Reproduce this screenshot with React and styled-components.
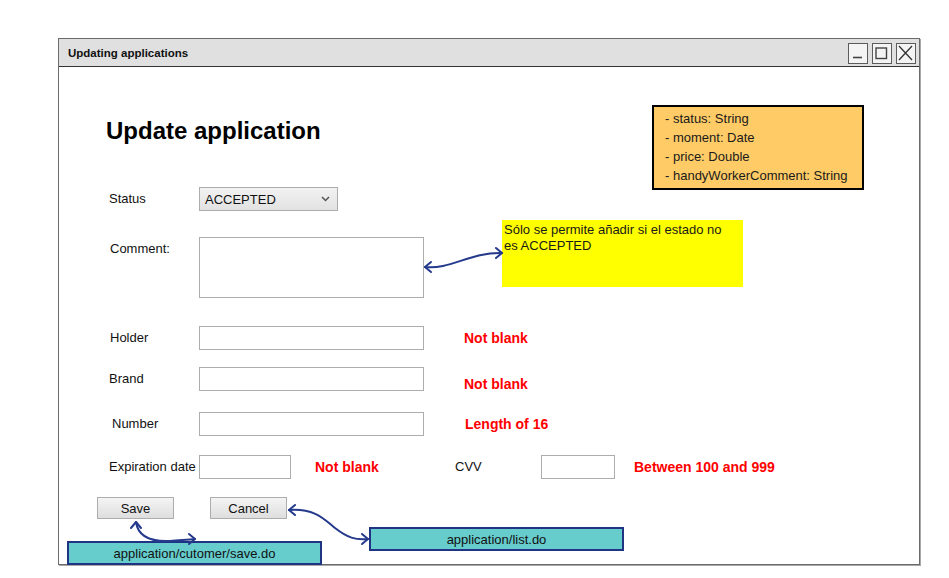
import React from "react";
import styled, { createGlobalStyle } from "styled-components";

const GlobalStyle = createGlobalStyle`
  body {
    margin: 0;
    background: #ffffff;
    font-family: "Liberation Sans", Arial, sans-serif;
    color: #000000;
  }
`;

const Page = styled.div`
  width: 949px;
  height: 578px;
  box-sizing: border-box;
  padding: 38px 0 0 58px;
  overflow: hidden;
`;

const Window = styled.div`
  width: 862px;
  height: 527px;
  box-sizing: border-box;
  border: 1px solid #6b6b6b;
  box-shadow: 1px 1px 0 #a8a8a8;
  background: #ffffff;
  display: flex;
  flex-direction: column;
`;

const TitleBar = styled.div`
  height: 27px;
  flex: none;
  display: flex;
  align-items: center;
  justify-content: space-between;
  padding: 0 3px 0 9px;
  background: #e0e0e0;
  border-bottom: 1px solid #333333;
  font-size: 11.5px;
  font-weight: 700;
  color: #111111;
`;

const WinButtons = styled.div`
  display: flex;
  gap: 4px;
  margin-top: 2px;
`;

const WinButton = styled.div`
  width: 20px;
  height: 21px;
  box-sizing: border-box;
  border: 1.5px solid #5c5c5c;
  background: #f4f4f4;
  svg {
    display: block;
  }
`;

const Content = styled.div`
  position: relative;
  flex: 1;
  padding-left: 38px;
  display: flex;
  flex-direction: column;
  align-items: flex-start;
`;

const Heading = styled.h1`
  margin: 50px 0 0 9px;
  font-size: 24px;
  line-height: 28px;
  font-weight: 700;
`;

const Row = styled.div`
  display: flex;
  align-items: ${(p) => (p.$top ? "flex-start" : "center")};
  margin-top: ${(p) => p.$mt}px;
  padding-left: ${(p) => (p.$flush ? 0 : 12)}px;
  gap: ${(p) => p.$gap || 0}px;
`;

const Label = styled.div`
  width: ${(p) => p.$w || 90}px;
  flex: none;
  box-sizing: border-box;
  padding-left: ${(p) => p.$dx || 0}px;
  padding-top: ${(p) => p.$dy || 0}px;
  font-size: 13px;
  line-height: 16px;
  color: #111111;
`;

const Field = styled.div`
  width: ${(p) => p.$w}px;
  height: ${(p) => p.$h || 24}px;
  flex: none;
  box-sizing: border-box;
  border: 1px solid #adadad;
  background: #ffffff;
`;

const Select = styled.div`
  width: 139px;
  height: 24px;
  box-sizing: border-box;
  border: 1px solid #adadad;
  background: linear-gradient(#f2f2f2, #e2e2e2);
  display: flex;
  align-items: center;
  justify-content: space-between;
  padding: 0 7px 0 5px;
  font-size: 13px;
  color: #111111;
`;

const Hint = styled.div`
  width: ${(p) => (p.$w ? `${p.$w}px` : "auto")};
  flex: none;
  margin-left: ${(p) => p.$ml}px;
  margin-top: ${(p) => p.$dy || 0}px;
  margin-bottom: ${(p) => -(p.$dy || 0)}px;
  font-size: 14px;
  font-weight: 700;
  color: #ff0000;
`;

const Button = styled.div`
  width: 77px;
  height: 22px;
  box-sizing: border-box;
  border: 1px solid #adadad;
  background: linear-gradient(#f4f4f4, #dedede);
  display: flex;
  align-items: center;
  justify-content: center;
  font-size: 13px;
  color: #111111;
`;

const OrangeNote = styled.div`
  position: absolute;
  left: 593px;
  top: 38px;
  width: 212px;
  height: 85px;
  box-sizing: border-box;
  border: 2px solid #000000;
  background: #fecb66;
  padding: 2px 0 0 11px;
  font-size: 13px;
  line-height: 19px;
  color: #1a1a1a;
`;

const YellowNote = styled.div`
  position: absolute;
  left: 443px;
  top: 153px;
  width: 241px;
  height: 67px;
  box-sizing: border-box;
  background: #ffff00;
  padding: 2px 2px;
  font-size: 13px;
  line-height: 16px;
  color: #1a1a1a;
`;

const LinkBox = styled.div`
  position: absolute;
  left: ${(p) => p.$x}px;
  top: ${(p) => p.$y}px;
  width: 255px;
  height: 24px;
  box-sizing: border-box;
  border: 2px solid #1f3583;
  background: #66cccc;
  display: flex;
  align-items: center;
  justify-content: center;
  font-size: 13px;
  color: #111111;
`;

const Arrows = styled.svg`
  position: absolute;
  left: 0;
  top: 0;
  overflow: visible;
  pointer-events: none;
`;

const ink = "#253a8c";

const App = () => {
  return (
    <>
      <GlobalStyle />
      <Page>
        <Window>
          <TitleBar>
            <span>Updating applications</span>
            <WinButtons>
              <WinButton>
                <svg width="17" height="18" viewBox="0 0 17 18">
                  <path d="M4 13.5 H13" stroke="#444" strokeWidth="1.6" />
                </svg>
              </WinButton>
              <WinButton>
                <svg width="17" height="18" viewBox="0 0 17 18">
                  <rect x="3" y="4" width="10.5" height="10.5" fill="none" stroke="#444" strokeWidth="1.4" />
                </svg>
              </WinButton>
              <WinButton>
                <svg width="17" height="18" viewBox="0 0 17 18">
                  <path d="M2 2 L15 16 M15 2 L2 16" stroke="#333" strokeWidth="1.3" />
                </svg>
              </WinButton>
            </WinButtons>
          </TitleBar>

          <Content>
            <Heading>Update application</Heading>

            <Row $mt={42}>
              <Label>Status</Label>
              <Select>
                <span>ACCEPTED</span>
                <svg width="9" height="6" viewBox="0 0 9 6">
                  <path d="M1 1 L4.5 4.5 L8 1" fill="none" stroke="#555" strokeWidth="1.5" />
                </svg>
              </Select>
            </Row>

            <Row $mt={26} $top>
              <Label $dx={1} $dy={4}>Comment:</Label>
              <Field $w={225} $h={61} />
            </Row>

            <Row $mt={28}>
              <Label $dx={1}>Holder</Label>
              <Field $w={225} />
              <Hint $ml={40}>Not blank</Hint>
            </Row>

            <Row $mt={17}>
              <Label $dx={-1}>Brand</Label>
              <Field $w={225} />
              <Hint $ml={40} $dy={5}>Not blank</Hint>
            </Row>

            <Row $mt={21}>
              <Label $dx={3}>Number</Label>
              <Field $w={225} />
              <Hint $ml={41}>Length of 16</Hint>
            </Row>

            <Row $mt={19}>
              <Label>Expiration date</Label>
              <Field $w={92} />
              <Hint $ml={24} $w={140}>Not blank</Hint>
              <Label $w={86}>CVV</Label>
              <Field $w={74} />
              <Hint $ml={19}>Between 100 and 999</Hint>
            </Row>

            <Row $mt={18} $flush $gap={36}>
              <Button>Save</Button>
              <Button>Cancel</Button>
            </Row>

            <OrangeNote>
              <div>- status: String</div>
              <div>- moment: Date</div>
              <div>- price: Double</div>
              <div>- handyWorkerComment: String</div>
            </OrangeNote>

            <YellowNote>
              Sólo se permite añadir si el estado no
              <br />
              es ACCEPTED
            </YellowNote>

            <LinkBox $x={8} $y={474}>application/cutomer/save.do</LinkBox>
            <LinkBox $x={310} $y={460}>application/list.do</LinkBox>

            <Arrows width="860" height="498">
              <g transform="translate(-59 -67)" fill="none" stroke={ink} strokeWidth="2" strokeLinecap="round" strokeLinejoin="round">
                <path d="M425 267 C450 270 470 252 502 253" />
                <path d="M431 262 L425 267 L431 272" />
                <path d="M496 248 L502 253 L496 258" />

                <path d="M136 522 C138 536 150 542 170 541 C180 540 188 540 195 539" />
                <path d="M131 528 L136 522 L141 528" />
                <path d="M189 534 L195 539 L189 544" />

                <path d="M289 510 C315 508 325 520 335 528 C348 538 355 540 368 539" />
                <path d="M295 505 L289 510 L295 515" />
                <path d="M362 534 L368 539 L362 544" />
              </g>
            </Arrows>
          </Content>
        </Window>
      </Page>
    </>
  );
};

export default App;
